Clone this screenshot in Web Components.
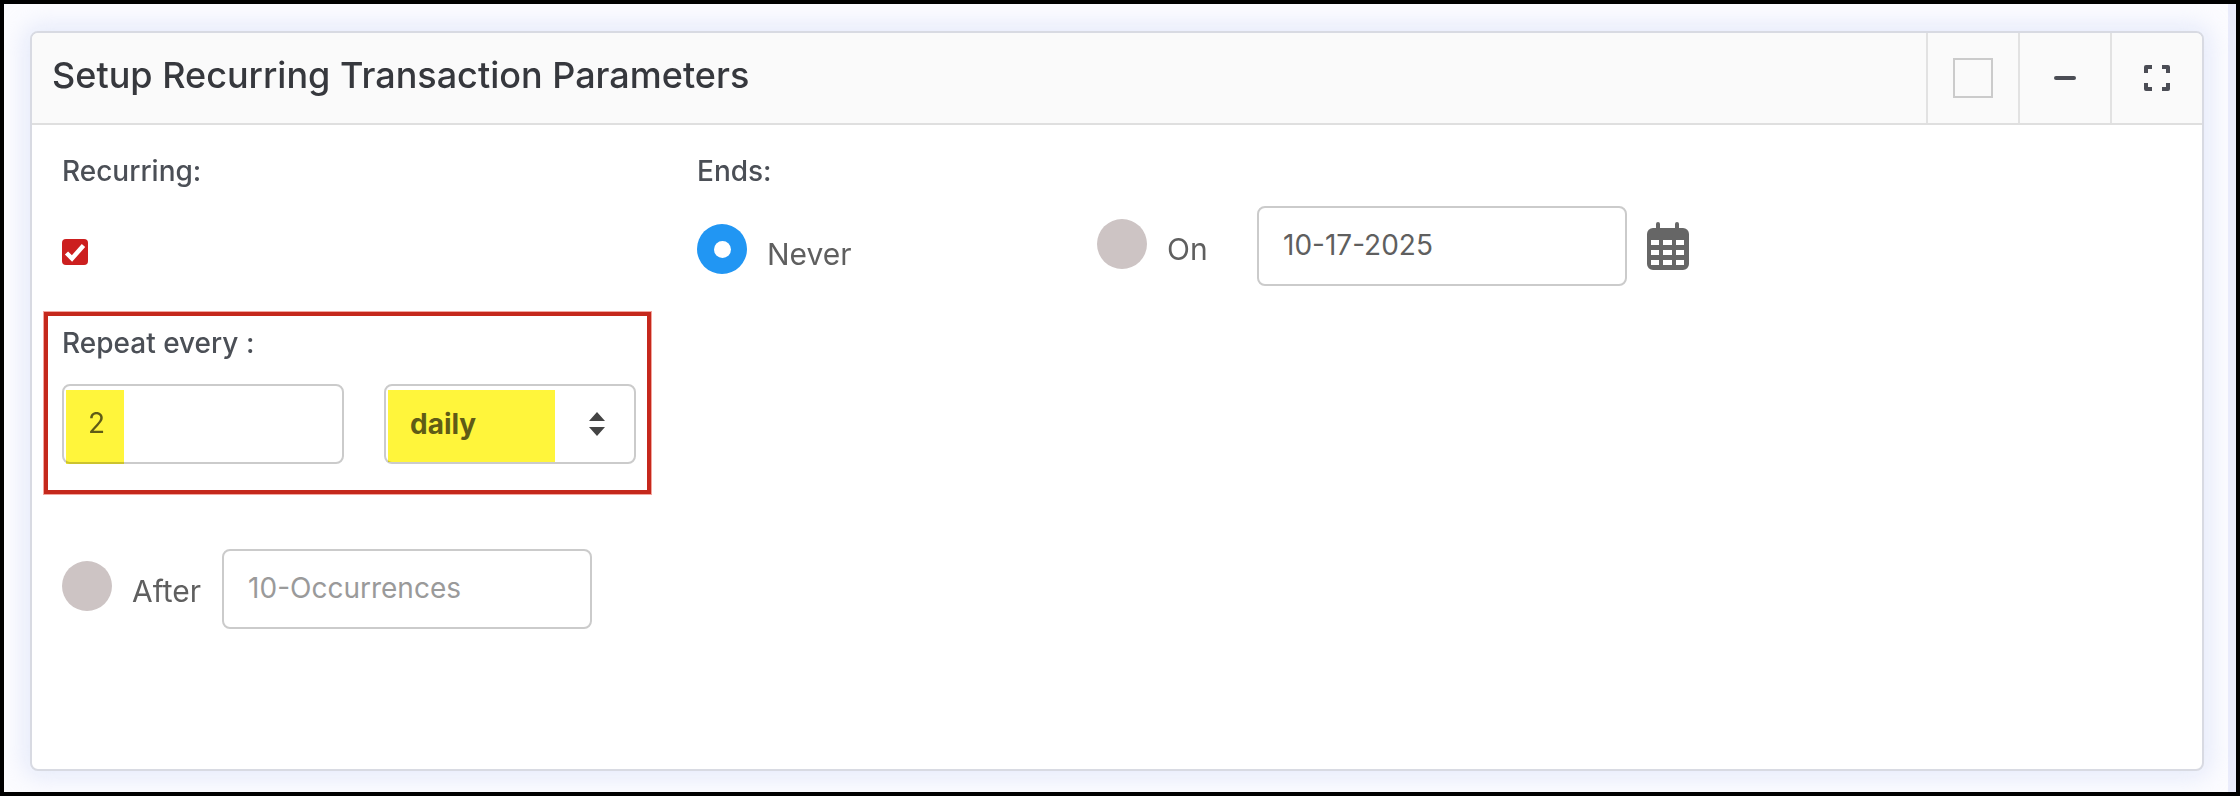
<!DOCTYPE html>
<html>
<head>
<meta charset="utf-8">
<title>Setup Recurring Transaction Parameters</title>
<style>
    html, body { margin: 0; height: 100%; background: #000; }
    body { font-family: "Inter", "Liberation Sans", sans-serif; }
</style>
</head>
<body>
<recurring-page>
    <panel-card heading="Setup Recurring Transaction Parameters">
        <div style="display:flex">
            <div style="width:635px">
                <field-label>Recurring:</field-label>
                <check-box></check-box>
                <note-box>
                    <field-label>Repeat every :</field-label>
                    <div style="display:flex;gap:40px;margin-top:22px">
                        <text-box width="282" marked="58">2</text-box>
                        <select-box width="252" marked="167">daily</select-box>
                    </div>
                </note-box>
                <div style="display:flex;margin-top:55px">
                    <radio-option style="margin-top:12px">After</radio-option>
                    <text-box width="370" placeholder style="margin-left:21px">10-Occurrences</text-box>
                </div>
            </div>
            <div>
                <field-label>Ends:</field-label>
                <div style="display:flex;margin-top:16px">
                    <radio-option checked style="margin-top:18px;width:400px">Never</radio-option>
                    <radio-option style="margin-top:13px;width:160px">On</radio-option>
                    <text-box width="370">10-17-2025</text-box>
                    <calendar-icon style="margin:16px 0 0 20px"></calendar-icon>
                </div>
            </div>
        </div>
    </panel-card>
</recurring-page>

<script>
class RecurringPage extends HTMLElement {
    shadowRoot_ = this.attachShadow({mode: 'open'});

    connectedCallback() {
        this.shadowRoot_.innerHTML = `
        <style>
            :host {
                display: block;
                box-sizing: border-box;
                width: 2240px;
                height: 796px;
                padding: 4px;
                background: #000;
            }
            .screen {
                box-sizing: border-box;
                height: 100%;
                padding: 27px 29px 21px 26px;
                background: #fcfcff;
                box-shadow: inset -8px 0 0 #ebedfc;
                overflow: hidden;
            }
        </style>
        <div class="screen"><slot></slot></div>
        `;
    }
}

class PanelCard extends HTMLElement {
    shadowRoot_ = this.attachShadow({mode: 'open'});

    connectedCallback() {
        this.shadowRoot_.innerHTML = `
        <style>
            :host {
                display: flex;
                flex-direction: column;
                box-sizing: border-box;
                height: 100%;
                width: 2174px;
                background: #fff;
                border: 2px solid #d8dae2;
                border-radius: 8px;
                box-shadow: 0 0 24px 6px rgba(205, 215, 245, 0.5);
            }
            .head {
                display: flex;
                height: 92px;
                background: #fafafa;
                border-bottom: 2px solid #dfdfdf;
                border-radius: 6px 6px 0 0;
                flex: none;
                box-sizing: border-box;
            }
            h1 {
                flex: 1;
                margin: 0;
                padding: 0 0 0 20px;
                font: 500 36px/84px "Inter", "Liberation Sans", sans-serif;
                color: #36383d;
            }
            .act {
                display: flex;
                align-items: center;
                justify-content: center;
                width: 92px;
                border-left: 2px solid #e2e2e2;
                box-sizing: border-box;
            }
            .box {
                box-sizing: border-box;
                width: 40px;
                height: 40px;
                border: 2px solid #cbcbcb;
            }
            .body {
                padding: 27px 0 0 30px;
            }
        </style>
        <div class="head">
            <h1>${this.getAttribute('heading')}</h1>
            <div class="act"><div class="box"></div></div>
            <div class="act">
                <svg width="24" height="6" viewBox="0 0 24 6"><rect x="1" y="1" width="22" height="4" rx="2" fill="#4b4d55"/></svg>
            </div>
            <div class="act">
                <svg width="28" height="28" viewBox="0 0 28 28" fill="none" stroke="#4b4d55" stroke-width="4" stroke-linejoin="round"><path d="M3 9V3h6M19 3h6v6M25 19v6h-6M9 25H3v-6"/></svg>
            </div>
        </div>
        <div class="body"><slot></slot></div>
        `;
    }
}

class FieldLabel extends HTMLElement {
    shadowRoot_ = this.attachShadow({mode: 'open'});

    connectedCallback() {
        this.shadowRoot_.innerHTML = `
        <style>
            :host {
                display: block;
                font: 500 28px/38px "Inter", "Liberation Sans", sans-serif;
                color: #4b4f56;
            }
        </style>
        <slot></slot>
        `;
    }
}

class CheckBox extends HTMLElement {
    shadowRoot_ = this.attachShadow({mode: 'open'});

    connectedCallback() {
        this.shadowRoot_.innerHTML = `
        <style>
            :host {
                display: block;
                width: 26px;
                height: 26px;
                margin-top: 49px;
            }
            svg { display: block; }
        </style>
        <svg width="26" height="26" viewBox="0 0 26 26">
            <rect width="26" height="26" rx="4" fill="#cc1f1f"/>
            <path d="M4.5 14l5.5 5.5L21.5 6.5" fill="none" stroke="#fff" stroke-width="4.5"/>
        </svg>
        `;
    }
}

class NoteBox extends HTMLElement {
    shadowRoot_ = this.attachShadow({mode: 'open'});

    connectedCallback() {
        this.shadowRoot_.innerHTML = `
        <style>
            :host {
                display: block;
                box-sizing: border-box;
                width: 607px;
                height: 182px;
                margin: 47px 0 0 -18px;
                padding: 8px 0 0 14px;
                border: 4px solid #c5281c;
                outline: 1px solid #f3a59e;
            }
        </style>
        <slot></slot>
        `;
    }
}

class TextBox extends HTMLElement {
    shadowRoot_ = this.attachShadow({mode: 'open'});

    connectedCallback() {
        const marked = this.getAttribute('marked');
        this.shadowRoot_.innerHTML = `
        <style>
            :host {
                display: block;
                position: relative;
                box-sizing: border-box;
                width: ${this.getAttribute('width')}px;
                height: 80px;
                padding-left: 24px;
                border: 2px solid #cbcbcb;
                border-radius: 8px;
                background: #fff;
                font: 400 28px/74px "Inter", "Liberation Sans", sans-serif;
                color: ${this.hasAttribute('placeholder') ? '#9a9a9a' : '#5f5f5f'};
            }
            .mark {
                position: absolute;
                left: 2px;
                top: 4px;
                bottom: -2px;
                width: ${marked}px;
                background: #fff53b;
                mix-blend-mode: multiply;
            }
        </style>
        <slot></slot>
        ${marked ? '<div class="mark"></div>' : ''}
        `;
    }
}

class SelectBox extends HTMLElement {
    shadowRoot_ = this.attachShadow({mode: 'open'});

    connectedCallback() {
        this.shadowRoot_.innerHTML = `
        <style>
            :host {
                display: flex;
                align-items: center;
                position: relative;
                box-sizing: border-box;
                width: ${this.getAttribute('width')}px;
                height: 80px;
                padding-left: 24px;
                border: 2px solid #cbcbcb;
                border-radius: 8px;
                background: #fff;
                font: 700 28px "Inter", "Liberation Sans", sans-serif;
                color: #5f5f5f;
            }
            .text { flex: 1; }
            svg { margin-right: 29px; }
            .mark {
                position: absolute;
                left: 2px;
                top: 4px;
                bottom: 0;
                width: ${this.getAttribute('marked')}px;
                background: #fff53b;
                mix-blend-mode: multiply;
            }
        </style>
        <div class="text"><slot></slot></div>
        <svg width="16" height="24" viewBox="0 0 16 24" fill="#444"><path d="M8 0l8 9H0zM0 15h16l-8 9z"/></svg>
        <div class="mark"></div>
        `;
    }
}

class RadioOption extends HTMLElement {
    shadowRoot_ = this.attachShadow({mode: 'open'});

    connectedCallback() {
        const on = this.hasAttribute('checked');
        this.shadowRoot_.innerHTML = `
        <style>
            :host {
                display: flex;
                gap: 20px;
                font: 400 30px/1 "Inter", "Liberation Sans", sans-serif;
                color: #5f5f5f;
            }
            .dot {
                display: flex;
                align-items: center;
                justify-content: center;
                flex: none;
                width: 50px;
                height: 50px;
                border-radius: 50%;
                background: ${on ? '#2196f3' : '#cdc4c4'};
            }
            .dot i { width: 17px; height: 17px; border-radius: 50%; background: #fff; }
            .text { padding-top: 15px; }
        </style>
        <div class="dot">${on ? '<i></i>' : ''}</div>
        <div class="text"><slot></slot></div>
        `;
    }
}

class CalendarIcon extends HTMLElement {
    shadowRoot_ = this.attachShadow({mode: 'open'});

    connectedCallback() {
        this.shadowRoot_.innerHTML = `
        <style>
            :host { display: block; width: 43px; height: 48px; }
            svg { display: block; }
        </style>
        <svg width="43" height="48" viewBox="0 0 43 48">
            <path fill="#666" fill-rule="evenodd" d="M9 2a2 2 0 0 1 4 0v4h15V2a2 2 0 0 1 4 0v4h4a6 6 0 0 1 6 6v30a6 6 0 0 1-6 6H6a6 6 0 0 1-6-6V12a6 6 0 0 1 6-6h3zM4 18v5h8v-5zm12 0v5h9v-5zm13 0v5h8v-5zM4 28v5h8v-5zm12 0v5h9v-5zm13 0v5h8v-5zM4 38v5h8v-5zm12 0v5h9v-5zm13 0v5h8v-5z"/>
        </svg>
        `;
    }
}

customElements.define('recurring-page', RecurringPage);
customElements.define('panel-card', PanelCard);
customElements.define('field-label', FieldLabel);
customElements.define('check-box', CheckBox);
customElements.define('note-box', NoteBox);
customElements.define('text-box', TextBox);
customElements.define('select-box', SelectBox);
customElements.define('radio-option', RadioOption);
customElements.define('calendar-icon', CalendarIcon);
</script>
</body>
</html>
